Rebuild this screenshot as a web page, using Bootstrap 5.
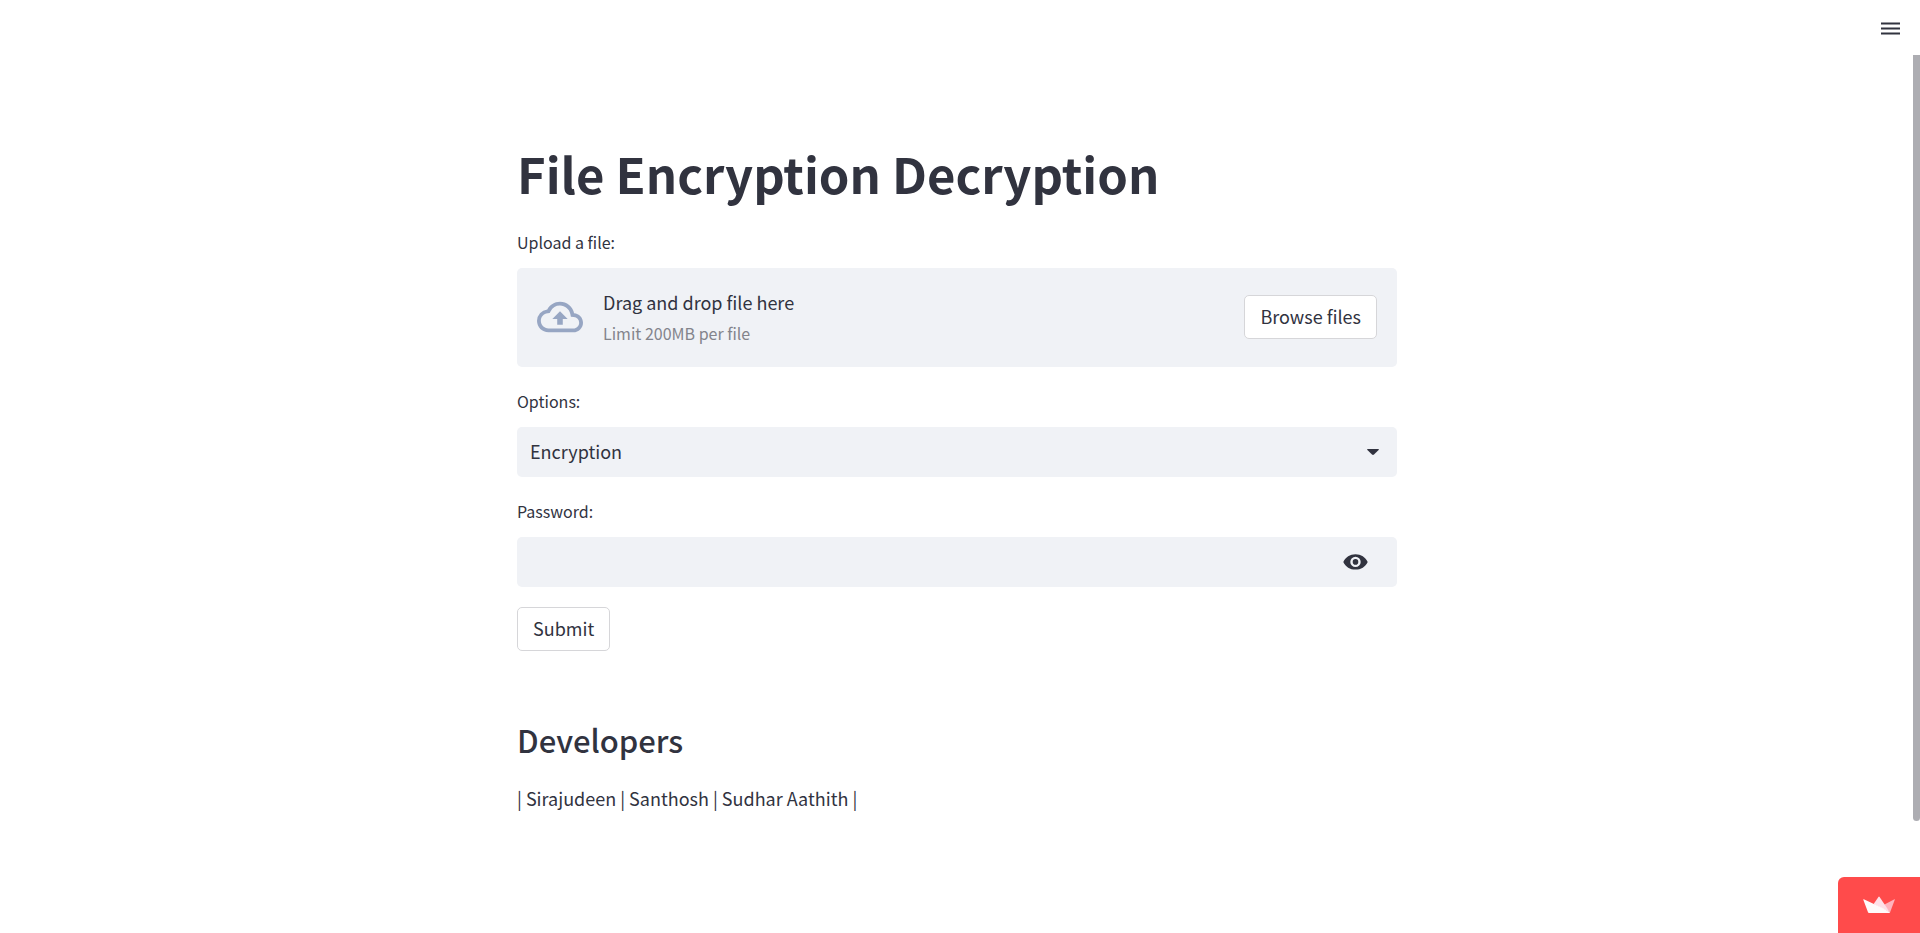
<!DOCTYPE html>
<html lang="en">
<head>
<meta charset="utf-8">
<meta name="viewport" content="width=device-width, initial-scale=1">
<title>File Encryption Decryption</title>
<link href="https://cdn.jsdelivr.net/npm/bootstrap@5.3.0/dist/css/bootstrap.min.css" rel="stylesheet">
<style>
  :root { --ink: #31333f; --field: #f0f2f6; --line: #d6d6d9; }
  body { font-family: "Noto Sans CJK JP", "Noto Sans", sans-serif; font-size: 18px; line-height: 30px; color: var(--ink); font-weight: 400; }
  .app-header { height: 55px; padding: 0 15px 1px 0; z-index: 5; }
  .app-main { padding: 140px 6px 60px 0; }
  .app-column { max-width: 920px; padding: 0 20px; }
  .page-title { font-size: 49px; line-height: 66px; font-weight: 700; margin-bottom: 22px; }
  .section-title { font-size: 31px; line-height: 42px; font-weight: 500; margin: 68px 0 22px; }
  .field-label { font-size: 16px; line-height: 28px; margin-bottom: 12px; }
  .form-block { margin-bottom: 20px; }
  .dropzone { background: var(--field); border-radius: 5px; padding: 16px 20px 18px; min-height: 99px; gap: 20px; }
  .drop-text { padding-top: 3px; }
  .hint { font-size: 16px; line-height: 32px; color: #83848c; }
  .btn-plain { --bs-btn-font-size: 18px; --bs-btn-line-height: 28px; --bs-btn-padding-x: 15px; --bs-btn-padding-y: 7px;
    --bs-btn-font-weight: 400; --bs-btn-color: var(--ink); --bs-btn-bg: #fff; --bs-btn-border-color: var(--line); --bs-btn-border-radius: 5px;
    --bs-btn-hover-color: #ff4b4b; --bs-btn-hover-border-color: #ff4b4b; padding-top: 6px; padding-bottom: 8px; }
  .field-box { background-color: var(--field); border: 0; border-radius: 5px; height: 50px; color: var(--ink); font-size: 18px; }
  select.field-box { padding: 0 40px 2px 13px; background-size: 12px 6px; background-position: right 18px center;
    background-image: url("data:image/svg+xml,%3Csvg xmlns='http://www.w3.org/2000/svg' viewBox='0 0 12 6'%3E%3Cpath d='M.6 0h10.800q.8.300.2 1L7 5.500q-1 .8-2 0L.4 1Q-.2.300.6 0z' fill='%2331333f'/%3E%3C/svg%3E"); }
  .field-box .form-control { font-size: 18px; }
  .eye-btn { padding: 0 29px 0 10px; line-height: 0; color: var(--ink); }
  .scroll-thumb { top: 55px; right: 0; width: 7px; bottom: 12%; background: #adadb2; border-radius: 0 0 4px 4px; }
  .host-badge { width: 82px; height: 56px; background: #ff4b4b; border-top-left-radius: 6px; }
</style>
</head>
<body>
<header class="app-header fixed-top d-flex align-items-center justify-content-end bg-white">
  <button type="button" class="btn p-1 border-0 lh-1" aria-label="Menu">
    <svg width="21" height="15" viewBox="0 0 21 15" fill="none" stroke="#31333f" stroke-width="2"><path d="M1 2.500h19M1 7.500h19M1 12.500h19"/></svg>
  </button>
</header>

<main class="app-main">
  <div class="app-column mx-auto">
    <h1 class="page-title">File Encryption Decryption</h1>
    <form>
      <div class="form-block">
        <label class="field-label d-block" for="file">Upload a file:</label>
        <div class="dropzone d-flex align-items-center">
          <input type="file" id="file" class="d-none">
          <svg class="flex-shrink-0" width="46" height="46" viewBox="0 0 24 24" fill="#97a6c3"><path d="M19.350 10.040A7.490 7.490 0 0 0 12 4C9.110 4 6.600 5.640 5.350 8.040A5.994 5.994 0 0 0 0 14c0 3.310 2.690 6 6 6h13c2.760 0 5-2.240 5-5 0-2.640-2.050-4.780-4.650-4.960zM19 18H6c-2.210 0-4-1.790-4-4 0-2.050 1.530-3.760 3.560-3.970l1.070-.110.500-.950A5.469 5.469 0 0 1 12 6c2.620 0 4.880 1.860 5.390 4.430l.300 1.500 1.530.110A2.980 2.980 0 0 1 22 15c0 1.650-1.350 3-3 3zM8 13h2.550v3h2.900v-3H16l-4-4z"/></svg>
          <div class="drop-text me-auto">
            <div>Drag and drop file here</div>
            <div class="hint">Limit 200MB per file</div>
          </div>
          <button type="button" class="btn btn-plain">Browse files</button>
        </div>
      </div>
      <div class="form-block">
        <label class="field-label d-block" for="option">Options:</label>
        <select id="option" class="form-select field-box"><option>Encryption</option><option>Decryption</option></select>
      </div>
      <div class="form-block">
        <label class="field-label d-block" for="password">Password:</label>
        <div class="field-box d-flex align-items-center">
          <input type="password" id="password" class="form-control bg-transparent border-0">
          <button type="button" class="btn border-0 eye-btn" aria-label="Show password">
            <svg width="25" height="16" viewBox="0 0 25 16"><path fill="currentColor" fill-rule="evenodd" d="M12.500.300C7 .300 2.600 3.200.300 7.900 2.600 12.700 7 15.600 12.500 15.600s9.900-2.900 12.200-7.700C22.400 3.200 18 .300 12.500.300zm0 2.400a5.200 5.200 0 1 1 0 10.400 5.200 5.200 0 0 1 0-10.400zm0 2.400a2.800 2.800 0 1 0 0 5.600 2.800 2.800 0 0 0 0-5.600z"/></svg>
          </button>
        </div>
      </div>
      <button type="submit" class="btn btn-plain">Submit</button>
    </form>
    <h2 class="section-title">Developers</h2>
    <p class="mb-0">| Sirajudeen | Santhosh | Sudhar Aathith |</p>
  </div>
</main>

<div class="scroll-thumb position-fixed" aria-hidden="true"></div>
<a href="#" class="host-badge position-fixed bottom-0 end-0 d-flex align-items-center justify-content-center" aria-label="Hosted with Streamlit">
  <svg width="32" height="18" viewBox="0 0 32 18"><path fill="#ffb3bd" d="M31.500 3.200q.600-.200.300.600L27 16.500 20.500 9z"/><path fill="#ffe0e8" d="M15.400 1q.600-.800 1.200 0L27 16.500 10.500 8.200z"/><path fill="#fffafa" d="M.3 3.800Q.1 3 .8 3.200L20 12.200l7 4.300q-.3.500-1 .500H6q-.800 0-1-.700z"/></svg>
</a>
<script src="https://cdn.jsdelivr.net/npm/bootstrap@5.3.0/dist/js/bootstrap.bundle.min.js"></script>
</body>
</html>
